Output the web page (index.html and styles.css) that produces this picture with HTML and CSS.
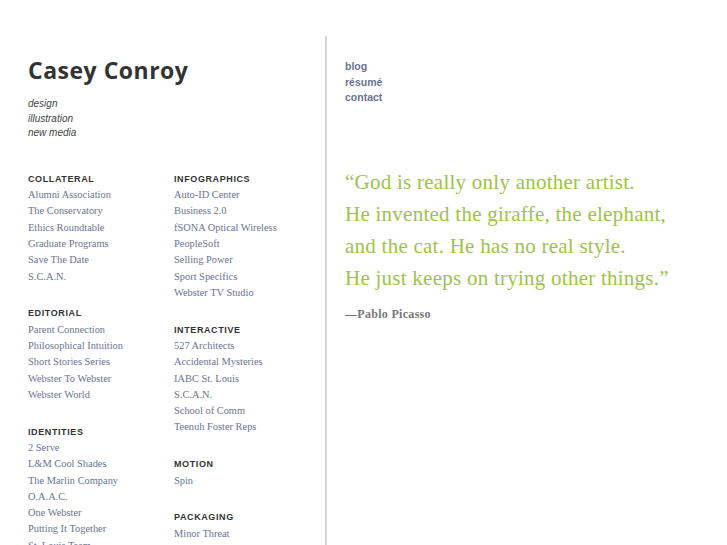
FILE: index.html
```html
<!DOCTYPE html>
<html>
<head>
<meta charset="utf-8">
<link rel="stylesheet" href="styles.css">
</head>
<body>
<div class="page">
  <div class="left">
    <h1 class="name">Casey Conroy</h1>
    <div class="tagline">
      <div>design</div>
      <div>illustration</div>
      <div>new media</div>
    </div>
    <div class="work">
      <div class="col">
        <div class="section">
          <h2>Collateral</h2>
          <a>Alumni Association</a>
          <a>The Conservatory</a>
          <a>Ethics Roundtable</a>
          <a>Graduate Programs</a>
          <a>Save The Date</a>
          <a>S.C.A.N.</a>
        </div>
        <div class="section">
          <h2>Editorial</h2>
          <a>Parent Connection</a>
          <a>Philosophical Intuition</a>
          <a>Short Stories Series</a>
          <a>Webster To Webster</a>
          <a>Webster World</a>
        </div>
        <div class="section">
          <h2>Identities</h2>
          <a>2 Serve</a>
          <a>L&amp;M Cool Shades</a>
          <a>The Marlin Company</a>
          <a>O.A.A.C.</a>
          <a>One Webster</a>
          <a>Putting It Together</a>
          <a>St. Louis Team</a>
        </div>
      </div>
      <div class="col">
        <div class="section">
          <h2>Infographics</h2>
          <a>Auto-ID Center</a>
          <a>Business 2.0</a>
          <a>fSONA Optical Wireless</a>
          <a>PeopleSoft</a>
          <a>Selling Power</a>
          <a>Sport Specifics</a>
          <a>Webster TV Studio</a>
        </div>
        <div class="section">
          <h2>Interactive</h2>
          <a>527 Architects</a>
          <a>Accidental Mysteries</a>
          <a>IABC St. Louis</a>
          <a>S.C.A.N.</a>
          <a>School of Comm</a>
          <a>Teenuh Foster Reps</a>
        </div>
        <div class="section">
          <h2>Motion</h2>
          <a>Spin</a>
        </div>
        <div class="section">
          <h2>Packaging</h2>
          <a>Minor Threat</a>
        </div>
      </div>
    </div>
  </div>
  <div class="right">
    <nav class="nav">
      <a>blog</a>
      <a>résumé</a>
      <a>contact</a>
    </nav>
    <blockquote class="quote">
      <p>“God is really only another artist.<br>He invented the giraffe, the elephant,<br>and the cat. He has no real style.<br>He just keeps on trying other things.”</p>
      <cite>—Pablo Picasso</cite>
    </blockquote>
  </div>
</div>
</body>
</html>
```
FILE: styles.css
```css
html, body {
  margin: 0;
  padding: 0;
  background: #fff;
}
.page {
  display: flex;
  margin-top: 36px;
  height: 509px;
  overflow: hidden;
}
.left {
  width: 297px;
  padding-left: 28px;
  border-right: 2px solid #d6d6d6;
  flex: none;
}
.name {
  margin: 21px 0 0 0;
  font-family: "Open Sans", sans-serif;
  font-weight: 700;
  font-size: 23px;
  line-height: 26px;
  color: #333;
  letter-spacing: 0.5px;
}
.tagline {
  margin-top: 14px;
  font-family: "Liberation Sans", Arial, sans-serif;
  font-style: italic;
  font-size: 10px;
  line-height: 14.6px;
  color: #444;
}
.work {
  display: grid;
  grid-template-columns: 146px 146px;
  margin-top: 30px;
}
.col {
  display: flex;
  flex-direction: column;
  gap: 20.5px;
}
.section {
  display: flex;
  flex-direction: column;
}
.section h2 {
  margin: 0;
  font-family: "Liberation Sans", Arial, sans-serif;
  font-weight: 700;
  font-size: 9px;
  line-height: 16.3px;
  letter-spacing: 0.6px;
  text-transform: uppercase;
  color: #333;
}
.section a {
  font-family: "Liberation Serif", "Times New Roman", serif;
  font-size: 10.4px;
  line-height: 16.3px;
  color: #6b7391;
  white-space: nowrap;
}
.right {
  padding-left: 18px;
  flex: 1;
}
.nav {
  display: flex;
  flex-direction: column;
  margin-top: 23px;
}
.nav a {
  font-family: "Liberation Sans", Arial, sans-serif;
  font-weight: 700;
  font-size: 10.5px;
  line-height: 15.5px;
  color: #6b7391;
}
.quote {
  margin: 60px 0 0 0;
}
.quote p {
  margin: 0;
  font-family: "Liberation Serif", "Times New Roman", serif;
  font-size: 21px;
  line-height: 32.2px;
  letter-spacing: 0.25px;
  color: #9ec24c;
}
.quote cite {
  display: block;
  margin-top: 13px;
  font-family: "Liberation Serif", "Times New Roman", serif;
  font-style: normal;
  font-weight: 700;
  font-size: 12px;
  line-height: 14px;
  letter-spacing: 0.3px;
  color: #777;
}
```
